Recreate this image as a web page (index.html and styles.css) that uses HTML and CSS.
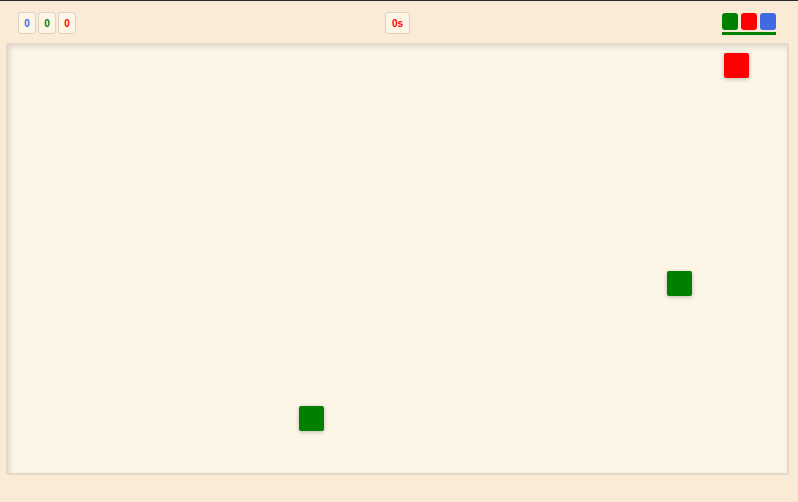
FILE: index.html
```html
<!DOCTYPE html>
<html>
<head>
<meta charset="utf-8">
<link rel="stylesheet" href="styles.css">
</head>
<body>
<div class="app">
  <header class="bar">
    <div class="scores">
      <span class="chip blue">0</span>
      <span class="chip green">0</span>
      <span class="chip red">0</span>
    </div>
    <span class="chip timer">0s</span>
    <div class="palette">
      <div class="swatches">
        <span class="sw sw-green"></span>
        <span class="sw sw-red"></span>
        <span class="sw sw-blue"></span>
      </div>
      <div class="underline"></div>
    </div>
  </header>
  <main class="board">
    <div class="piece p-red" style="left:716px;top:8px"></div>
    <div class="piece p-green" style="left:659px;top:226px"></div>
    <div class="piece p-green" style="left:291px;top:361px"></div>
  </main>
</div>
</body>
</html>
```
FILE: styles.css
```css
html, body {
  margin: 0;
  padding: 0;
}
body {
  background: #faebd7;
  border-top: 1px solid #2a2a2a;
  height: 501px;
  overflow: hidden;
  font-family: "Liberation Sans", Arial, sans-serif;
}
.app {
  display: flex;
  flex-direction: column;
}
.bar {
  display: flex;
  justify-content: space-between;
  align-items: flex-start;
  padding: 11px 22px 0 18px;
  height: 31px;
}
.scores {
  display: flex;
  gap: 2px;
}
.chip {
  box-sizing: border-box;
  height: 22px;
  min-width: 18px;
  border: 1px solid #dcd2c2;
  border-radius: 3px;
  background: #fdf5e6;
  display: flex;
  align-items: center;
  justify-content: center;
  font-size: 10px;
  font-weight: bold;
}
.blue { color: #4169e1; }
.green { color: #008000; }
.red { color: #ff0000; }
.timer {
  color: #ff0000;
  width: 25px;
  margin-right: 3px;
}
.palette {
  display: flex;
  flex-direction: column;
  gap: 2px;
  padding-top: 1px;
}
.swatches {
  display: flex;
  gap: 3px;
}
.sw {
  width: 16px;
  height: 17px;
  border-radius: 3px;
}
.sw-green { background: #008000; }
.sw-red { background: #ff0000; }
.sw-blue { background: #4169e1; }
.underline {
  height: 3px;
  background: #008000;
}
.board {
  position: relative;
  box-sizing: border-box;
  margin: 0 9px 0 6px;
  height: 432px;
  background: #fdf5e6;
  border: 2px solid #e3d9c8;
  border-radius: 2px;
  box-shadow: inset 2px 2px 5px rgba(0,0,0,0.12);
}
.piece {
  position: absolute;
  width: 25px;
  height: 25px;
  border-radius: 2px;
  box-shadow: 0 1px 4px rgba(0,0,0,0.25);
}
.p-red { background: #ff0000; }
.p-green { background: #008000; }
```
